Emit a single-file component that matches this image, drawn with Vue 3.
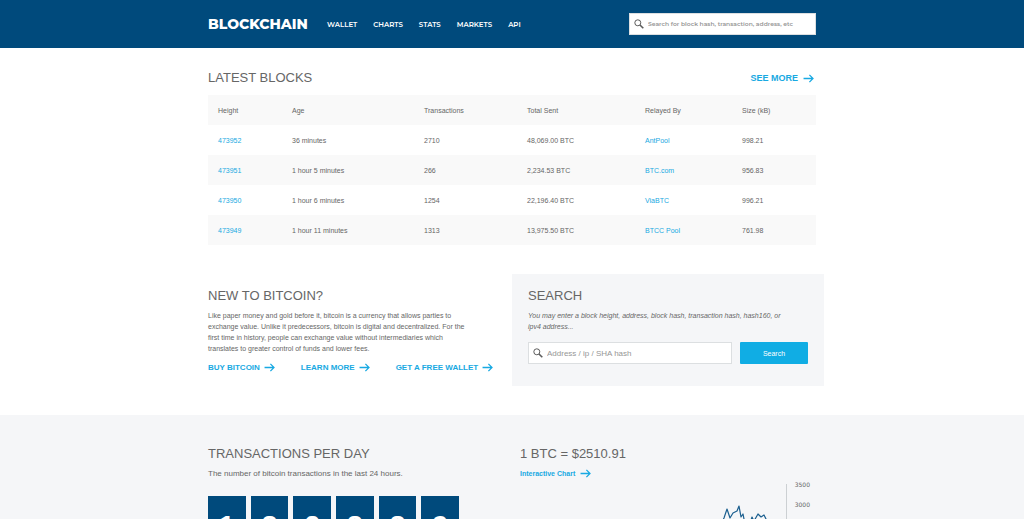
<script setup>
const nav = ['Wallet', 'Charts', 'Stats', 'Markets', 'API']
const columns = ['Height', 'Age', 'Transactions', 'Total Sent', 'Relayed By', 'Size (kB)']
const blocks = [
  { height: '473952', age: '36 minutes', tx: '2710', sent: '48,069.00 BTC', pool: 'AntPool', size: '998.21' },
  { height: '473951', age: '1 hour 5 minutes', tx: '266', sent: '2,234.53 BTC', pool: 'BTC.com', size: '956.83' },
  { height: '473950', age: '1 hour 6 minutes', tx: '1254', sent: '22,196.40 BTC', pool: 'ViaBTC', size: '996.21' },
  { height: '473949', age: '1 hour 11 minutes', tx: '1313', sent: '13,975.50 BTC', pool: 'BTCC Pool', size: '761.98' },
]
const actions = ['Buy Bitcoin', 'Learn More', 'Get a Free Wallet']
const digits = ['1', '8', '2', '8', '8', '9']
</script>

<template>
  <div class="page">
    <header class="topbar">
      <div class="wrap topbar-inner">
        <a class="brand" href="#">BLOCKCHAIN</a>
        <nav class="nav">
          <a v-for="item in nav" :key="item" href="#">{{ item }}</a>
        </nav>
        <form class="field top-search" @submit.prevent>
          <svg class="lens" viewBox="0 0 10 10" aria-hidden="true"><circle cx="3.8" cy="3.8" r="3" /><path d="M6 6 9.3 9.3" /></svg>
          <input type="text" aria-label="Search" placeholder="Search for block hash, transaction, address, etc" />
        </form>
      </div>
    </header>

    <main>
      <section class="wrap latest">
        <div class="latest-head">
          <h2>LATEST BLOCKS</h2>
          <a class="more large" href="#">SEE MORE
            <svg class="arrow" viewBox="0 0 12 10" aria-hidden="true"><path d="M0.5 5H11M7 1l4 4-4 4" /></svg>
          </a>
        </div>
        <table>
          <thead>
            <tr><th v-for="c in columns" :key="c" scope="col">{{ c }}</th></tr>
          </thead>
          <tbody>
            <tr v-for="b in blocks" :key="b.height">
              <td><a href="#">{{ b.height }}</a></td>
              <td>{{ b.age }}</td>
              <td>{{ b.tx }}</td>
              <td>{{ b.sent }}</td>
              <td><a href="#">{{ b.pool }}</a></td>
              <td>{{ b.size }}</td>
            </tr>
          </tbody>
        </table>
      </section>

      <div class="wrap intro">
        <section class="about">
          <h2>NEW TO BITCOIN?</h2>
          <p>Like paper money and gold before it, bitcoin is a currency that allows parties to exchange value. Unlike it predecessors, bitcoin is digital and decentralized. For the first time in history, people can exchange value without intermediaries which translates to greater control of funds and lower fees.</p>
          <div class="actions">
            <a v-for="a in actions" :key="a" class="more upper" href="#">{{ a }}
              <svg class="arrow" viewBox="0 0 12 10" aria-hidden="true"><path d="M0.5 5H11M7 1l4 4-4 4" /></svg>
            </a>
          </div>
        </section>
        <section class="panel">
          <h2>SEARCH</h2>
          <p><em>You may enter a block height, address, block hash, transaction hash, hash160, or ipv4 address...</em></p>
          <form class="search-row" @submit.prevent>
            <div class="field">
              <svg class="lens" viewBox="0 0 10 10" aria-hidden="true"><circle cx="3.8" cy="3.8" r="3" /><path d="M6 6 9.3 9.3" /></svg>
              <input type="text" aria-label="Address, ip or SHA hash" placeholder="Address / ip / SHA hash" />
            </div>
            <button type="submit">Search</button>
          </form>
        </section>
      </div>

      <div class="stats">
        <div class="wrap stats-inner">
          <section>
            <h2>TRANSACTIONS PER DAY</h2>
            <p class="lead">The number of bitcoin transactions in the last 24 hours.</p>
            <div class="counter">
              <span v-for="(d, i) in digits" :key="i">{{ d }}</span>
            </div>
          </section>
          <section class="price">
            <h2>1 BTC = $2510.91</h2>
            <a class="more" href="#">Interactive Chart
              <svg class="arrow" viewBox="0 0 12 10" aria-hidden="true"><path d="M0.5 5H11M7 1l4 4-4 4" /></svg>
            </a>
            <div class="chart">
              <svg class="plot" viewBox="0 0 70 100" aria-hidden="true">
                <path class="axis" d="M67.5 0V100" />
                <path class="line" d="M0 52 3 38 5 34 8 25 11 34 14 29 18 27 20 22 22 33 24 30 26 40 30 42 33 33 35 37 39 30 42 33 45 31 48 37 51 46" />
              </svg>
              <div class="ticks"><span>3500</span><span>3000</span></div>
            </div>
          </section>
        </div>
      </div>
    </main>
  </div>
</template>

<style>
html,
body {
  overflow: hidden;
}
</style>

<style scoped>
.page {
  height: 100vh;
  overflow: hidden;
  background: #fff;
  color: #666;
  font: 7px/11px "Liberation Sans", Arial, sans-serif;
}
.page * {
  box-sizing: border-box;
}
a {
  color: #18a9e2;
  text-decoration: none;
}
h2 {
  margin: 0;
  font-size: 13px;
  line-height: 16px;
  font-weight: 400;
}
p {
  margin: 0;
}
.wrap {
  max-width: 608px;
  margin: 0 auto;
}
.topbar {
  background: #004a7c;
}
.topbar-inner {
  display: flex;
  align-items: center;
  height: 48px;
  font-family: Montserrat, Inter, sans-serif;
}
.brand {
  width: 119px;
  color: #fff;
  font-size: 14px;
  font-weight: 800;
}
.nav {
  display: flex;
  flex: 1;
  gap: 16px;
}
.nav a {
  color: #fff;
  font-size: 7px;
  font-weight: 600;
  text-transform: uppercase;
}
.field {
  display: flex;
  align-items: center;
  height: 22px;
  border: 1px solid #dcdfe1;
  background: #fff;
}
.top-search {
  width: 187px;
}
.lens {
  flex: none;
  width: 10px;
  height: 10px;
  margin: 0 4px 0 4px;
  fill: none;
  stroke: #5c5c5c;
  stroke-width: 1;
}
.lens path {
  stroke-width: 1.6;
}
input {
  flex: 1;
  min-width: 0;
  padding: 0;
  border: 0;
  outline: 0;
  background: none;
  color: #636363;
  font: inherit;
  font-size: 8px;
}
input::placeholder {
  color: #969696;
  opacity: 1;
}
.top-search input {
  font-size: 6px;
  font-weight: 600;
}
.latest {
  padding-top: 22px;
}
.latest-head {
  display: flex;
  justify-content: space-between;
  align-items: center;
  padding-right: 2px;
  margin-bottom: 9px;
}
.more {
  display: inline-flex;
  align-items: center;
  gap: 5px;
  font-weight: 700;
  white-space: nowrap;
}
.large {
  font-size: 9px;
}
.upper {
  font-size: 8px;
  gap: 4px;
  text-transform: uppercase;
}
.arrow {
  width: 11px;
  height: 9px;
  fill: none;
  stroke: currentColor;
  stroke-width: 1.4;
}
table {
  width: 100%;
  border-collapse: collapse;
  table-layout: fixed;
}
th,
td {
  height: 30px;
  padding: 0 0 0 10px;
  text-align: left;
  font-weight: 400;
}
th:nth-child(1) {
  width: 74px;
}
th:nth-child(2) {
  width: 132px;
}
th:nth-child(3) {
  width: 103px;
}
th:nth-child(4) {
  width: 118px;
}
th:nth-child(5) {
  width: 97px;
}
thead tr,
tbody tr:nth-child(even) {
  background: #f9f9f9;
}
.intro {
  display: flex;
  margin-top: 29px;
}
.about {
  flex: 1;
  padding-top: 14px;
}
.about p {
  margin-top: 6px;
  padding-right: 42px;
}
.actions {
  display: flex;
  gap: 26px;
  margin-top: 8px;
}
.panel {
  width: 312px;
  margin-right: -8px;
  padding: 14px 16px 22px;
  background: #f5f6f8;
}
.panel p {
  margin-top: 6px;
  padding-right: 16px;
}
.search-row {
  display: flex;
  gap: 8px;
  margin-top: 10px;
}
.search-row .field {
  flex: 1;
}
button {
  width: 68px;
  border: 0;
  border-radius: 1px;
  background: #10ade4;
  color: #fff;
  font: inherit;
}
.stats {
  margin-top: 29px;
  background: #f5f6f8;
}
.stats-inner {
  display: flex;
  gap: 16px;
  padding: 31px 0 24px;
}
.stats section {
  flex: 1;
}
.lead {
  margin-top: 6px;
  font-size: 8px;
}
.counter {
  display: grid;
  grid-template-columns: repeat(6, 1fr);
  gap: 5px;
  max-width: 251px;
  margin-top: 17px;
}
.counter span {
  padding: 12px 0;
  background: #004a7c;
  color: #fff;
  font-size: 28px;
  line-height: 36px;
  font-weight: 700;
  text-align: center;
}
.price .more {
  margin-top: 6px;
}
.chart {
  display: flex;
  justify-content: flex-end;
  gap: 6px;
  padding-right: 6px;
}
.plot {
  width: 70px;
  height: 100px;
  margin-top: 5px;
  fill: none;
}
.axis {
  stroke: #ccd0d3;
}
.line {
  stroke: #1b5f8f;
  stroke-width: 1.2;
  stroke-linejoin: round;
}
.ticks {
  display: flex;
  flex-direction: column;
  gap: 9px;
  font-family: "DejaVu Sans", sans-serif;
  font-size: 6px;
}
</style>
